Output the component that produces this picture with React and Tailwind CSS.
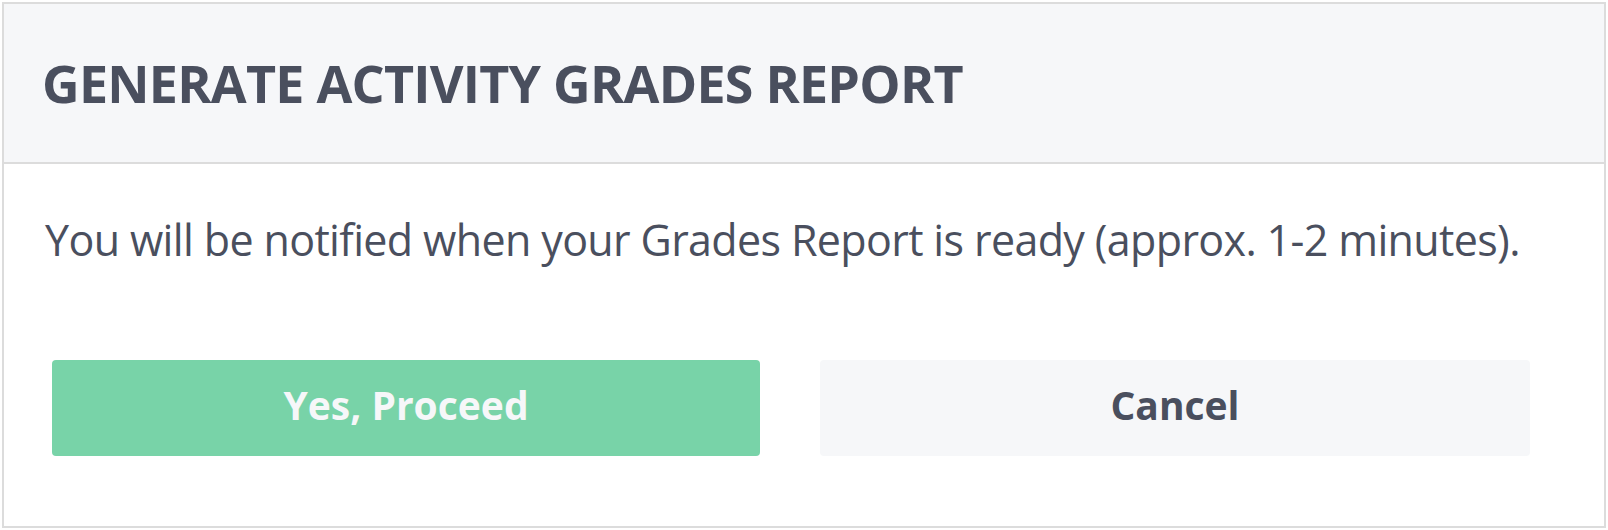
export default function App() {
  return (
    <div className="w-[1608px] h-[530px] bg-white p-[2px]" style={{ fontFamily: '"Open Sans", sans-serif' }}>
      <div className="w-[1604px] h-[526px] border-2 border-[#dcdcdc] flex flex-col">
        <div className="h-[160px] bg-[#f6f7f9] border-b-2 border-[#dcdcdc] flex items-center pl-[38px]">
          <h1 className="text-[52px] leading-[52px] font-bold text-[#4a4f5e] tracking-[-0.75px]">GENERATE ACTIVITY GRADES REPORT</h1>
        </div>
        <div className="flex flex-col pl-[48px] pt-[54px]">
          <p className="text-[43px] leading-[43px] text-[#4a4f5e] ml-[-7px] tracking-[-0.64px]">You will be notified when your Grades Report is ready (approx. 1-2 minutes).</p>
          <div className="flex gap-[60px] mt-[99px]">
            <button className="w-[708px] h-[96px] rounded-[4px] bg-[#78d3a8] text-[#f6f7f9] text-[39px] font-bold flex items-center justify-center pb-[6px]">Yes, Proceed</button>
            <button className="w-[710px] h-[96px] rounded-[4px] bg-[#f6f7f9] text-[#4a4f5e] text-[39px] font-bold flex items-center justify-center pb-[6px]">Cancel</button>
          </div>
        </div>
      </div>
    </div>
  );
}
